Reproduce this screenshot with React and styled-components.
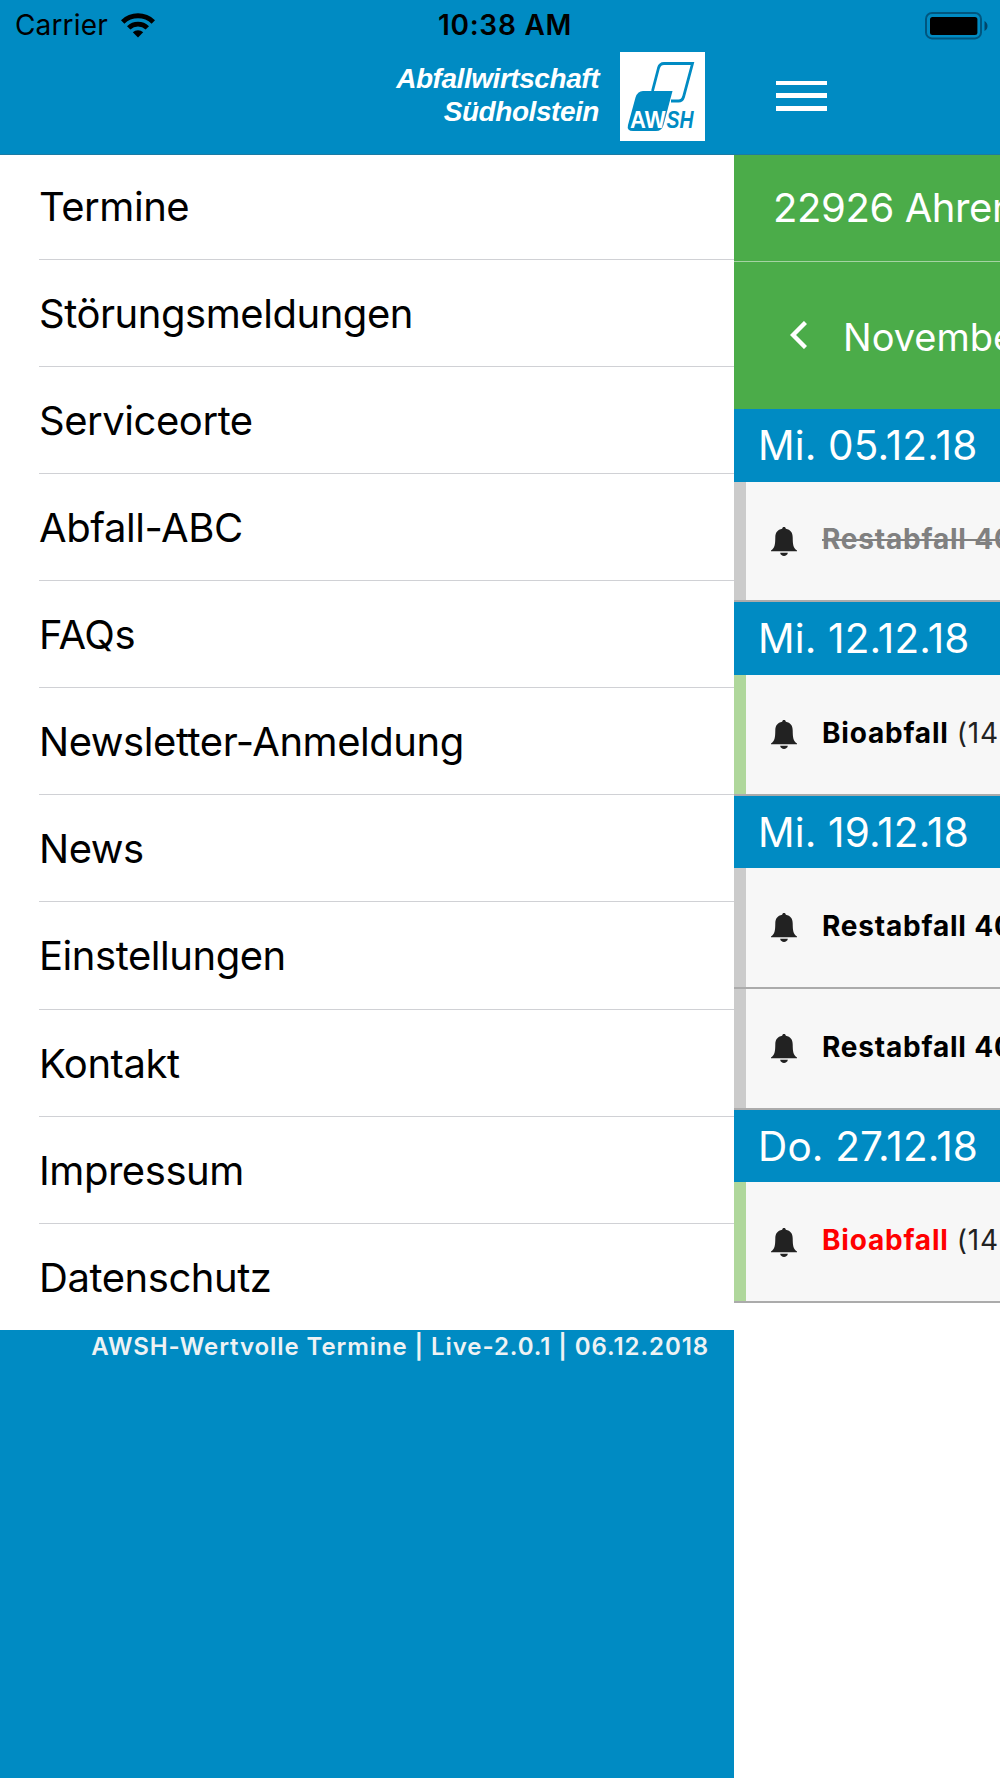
import styled, { createGlobalStyle } from "styled-components";

const menuItems = [
    "Termine",
    "Störungsmeldungen",
    "Serviceorte",
    "Abfall-ABC",
    "FAQs",
    "Newsletter-Anmeldung",
    "News",
    "Einstellungen",
    "Kontakt",
    "Impressum",
    "Datenschutz",
];

const termine = [
    { datum: "Mi. 05.12.18", abholungen: [{ id: 1, name: "Restabfall 40", tipo: "rest", vorbei: true }] },
    { datum: "Mi. 12.12.18", abholungen: [{ id: 2, name: "Bioabfall", info: "(14", tipo: "bio" }] },
    {
        datum: "Mi. 19.12.18",
        abholungen: [
            { id: 3, name: "Restabfall 40", tipo: "rest" },
            { id: 4, name: "Restabfall 40", tipo: "rest" },
        ],
    },
    { datum: "Do. 27.12.18", abholungen: [{ id: 5, name: "Bioabfall", info: "(14", tipo: "bio", verlegt: true }] },
];

const WifiIcon = () => (
    <Wifi viewBox="0 0 34 25">
        <path d="M0 7.2 A24.5 24.5 0 0 1 34 7.2 L30.6 10.7 A19.4 19.4 0 0 0 3.4 10.7 Z" />
        <path d="M6 13.2 A16 16 0 0 1 28 13.2 L24.6 16.6 A11 11 0 0 0 9.4 16.6 Z" />
        <path d="M11.8 19.2 A7.6 7.6 0 0 1 22.2 19.2 L17 24.5 Z" />
    </Wifi>
);

const BatteryIcon = () => (
    <Battery viewBox="0 0 64 28">
        <rect x="1" y="1" width="55" height="25.4" rx="6" fill="none" stroke="#00567f" strokeWidth="2" />
        <rect x="5" y="5" width="47.4" height="18" rx="2.5" />
        <path d="M59.5 9 C63.5 11 63.5 17 59.5 19 Z" fill="#00466a" />
    </Battery>
);

const BellIcon = () => (
    <Bell viewBox="0 0 26 29">
        <path d="M13 0 C14.1 0 14.7 .7 14.8 1.7 C19.6 2.6 21.7 5.6 21.7 10.5 C21.8 17 22 21 26 23.6 V24.3 H0 V23.6 C4 21 4.2 17 4.3 10.5 C4.3 5.6 6.4 2.6 11.2 1.7 C11.3 .7 11.9 0 13 0 Z" />
        <path d="M9.2 25.8 H16.8 C16.5 30 9.5 30 9.2 25.8 Z" />
    </Bell>
);

const AwshLogo = () => (
    <Logo viewBox="0 0 85 89">
        <rect width="85" height="89" fill="#fff" />
        <path d="M32.5 39 L38.5 16 Q39.8 11.5 44 11.5 H72.5 L63.5 45 Q62.3 49 58.5 49 H51" fill="none" stroke="#008bc3" strokeWidth="2.8" />
        <path d="M23 39 H52.5 L43.5 73 Q41.8 79 36 79 H13 Q6.5 79 8 73 L15.5 45.5 Q17.5 39 23 39 Z" fill="#008bc3" />
        <text x="10" y="76" fontSize="24.5" fontWeight="bold" fill="#fff" textLength="35.5" lengthAdjust="spacingAndGlyphs">AW</text>
        <text x="46.5" y="76" fontSize="24.5" fontWeight="bold" fontStyle="italic" fill="#008bc3" textLength="27" lengthAdjust="spacingAndGlyphs">SH</text>
    </Logo>
);

const App = () => {
    return (
        <>
            <GlobalStyle />
            <Screen>
                <StatusBar>
                    <Carrier>
                        Carrier
                        <WifiIcon />
                    </Carrier>
                    <Clock>10:38 AM</Clock>
                    <BatteryIcon />
                </StatusBar>
                <Header>
                    <Brand>
                        Abfallwirtschaft
                        <br />
                        Südholstein
                    </Brand>
                    <AwshLogo />
                    <MenuButton aria-label="Menü">
                        <MenuLine />
                        <MenuLine />
                        <MenuLine />
                    </MenuButton>
                </Header>
                <Body>
                    <Drawer>
                        <MenuList>
                            {menuItems.map((item) => (
                                <MenuItem key={item}>{item}</MenuItem>
                            ))}
                        </MenuList>
                        <Version>AWSH-Wertvolle Termine | Live-2.0.1 | 06.12.2018</Version>
                    </Drawer>
                    <Content>
                        <Place>22926 Ahren</Place>
                        <Month>
                            <Chevron viewBox="0 0 17 28">
                                <path d="M15.5 1.5 L3 14 L15.5 26.5" />
                            </Chevron>
                            Novembe
                        </Month>
                        {termine.map((tag) => (
                            <section key={tag.datum}>
                                <DateBar>{tag.datum}</DateBar>
                                {tag.abholungen.map((a) => (
                                    <Row key={a.id} $bio={a.tipo === "bio"}>
                                        <BellIcon />
                                        <Waste $vorbei={a.vorbei} $verlegt={a.verlegt}>{a.name}</Waste>
                                        {a.info && <Info>{a.info}</Info>}
                                    </Row>
                                ))}
                            </section>
                        ))}
                    </Content>
                </Body>
            </Screen>
        </>
    );
};

export default App;

// Styles
const GlobalStyle = createGlobalStyle`
  * {
    box-sizing: border-box;
  }

  body {
    margin: 0;
    font-family: Inter, "Liberation Sans", sans-serif;
  }
`;

const Screen = styled.div`
  width: 1000px;
  height: 1778px;
  display: flex;
  flex-direction: column;
  overflow: hidden;
  background-color: #fff;
`;

const StatusBar = styled.div`
  height: 50px;
  flex-shrink: 0;
  display: grid;
  grid-template-columns: 1fr auto 1fr;
  padding: 0 11px 0 15px;
  align-items: center;
  background-color: #008bc3;
  color: #000;
  font-size: 28px;
  line-height: 51px;

  > svg {
    justify-self: end;
  }
`;

const Carrier = styled.div`
  display: flex;
  align-items: center;
  gap: 13px;
  letter-spacing: 0.15px;
`;

const Clock = styled.div`
  padding-left: 6px;
  font-weight: 600;
  letter-spacing: 0.75px;
`;

const Wifi = styled.svg`
  width: 34px;
  height: 25px;
`;

const Battery = styled.svg`
  width: 64px;
  height: 28px;
`;

const Header = styled.header`
  height: 105px;
  flex-shrink: 0;
  display: flex;
  align-items: flex-start;
  padding-left: 320px;
  background-color: #008bc3;
  border-bottom: 1px solid #1b7ba4;
`;

const Brand = styled.div`
  width: 280px;
  padding: 12px 1px 0 0;
  text-align: right;
  color: #fff;
  font-family: "Liberation Sans", sans-serif;
  font-size: 28px;
  font-weight: bold;
  font-style: italic;
  line-height: 33px;
  letter-spacing: -0.45px;
`;

const Logo = styled.svg`
  width: 85px;
  height: 89px;
  margin: 2px 0 0 20px;
  font-family: "Liberation Sans", sans-serif;
`;

const MenuButton = styled.button`
  display: flex;
  flex-direction: column;
  gap: 8.5px;
  width: 51px;
  margin: 30.5px 0 0 71px;
  padding: 0;
  border: none;
  background: none;
`;

const MenuLine = styled.span`
  height: 4.4px;
  background-color: #fff;
`;

const Body = styled.div`
  flex: 1;
  display: flex;
`;

const Drawer = styled.nav`
  width: 734px;
  flex-shrink: 0;
  background-color: #008bc3;
`;

const MenuList = styled.ul`
  margin: 0;
  padding: 0 0 0 39px;
  list-style: none;
  background-color: #fff;
`;

const MenuItem = styled.li`
  height: 107.08px;
  border-bottom: 1px solid #d0d1d5;
  font-size: 40px;
  line-height: 107px;
  letter-spacing: -0.45px;
  color: #000;

  &:first-child {
    height: 105px;
    line-height: 103px;
  }

  &:last-child {
    height: 106.7px;
    border-bottom: none;
  }
`;

const Version = styled.div`
  padding-right: 25px;
  text-align: right;
  color: #eef2f4;
  font-size: 24px;
  font-weight: 600;
  line-height: 33px;
  letter-spacing: 0.92px;
`;

const Content = styled.main`
  flex: 1;
  min-width: 0;
  overflow: hidden;
  white-space: nowrap;
`;

const Place = styled.div`
  height: 107px;
  padding-left: 39px;
  border-bottom: 1px solid #a5d3a3;
  background-color: #4bac49;
  color: #fff;
  font-size: 40px;
  line-height: 106px;
  letter-spacing: -0.4px;
`;

const Month = styled.div`
  height: 147px;
  display: flex;
  align-items: center;
  padding: 3px 0 0 56px;
  background-color: #4bac49;
  color: #fff;
  font-size: 38px;
`;

const Chevron = styled.svg`
  width: 17px;
  height: 28px;
  flex-shrink: 0;
  margin: 0 36px 5px 0;
  fill: none;
  stroke: #fff;
  stroke-width: 4.4;
`;

const DateBar = styled.div`
  height: 72.5px;
  padding-left: 24px;
  background-color: #008bc3;
  color: #fff;
  font-size: 40.5px;
  line-height: 73px;
  letter-spacing: 0.15px;
`;

const Row = styled.div`
  height: 120.8px;
  display: flex;
  align-items: center;
  padding-left: 37px;
  border-bottom: 2px solid #ababab;
  box-shadow: inset 12px 0 0 ${({ $bio }) => ($bio ? "#afd79b" : "#cbcbcb")};
  background-color: #f7f7f7;
  font-size: 28px;
  letter-spacing: 0.8px;
`;

const Bell = styled.svg`
  width: 26px;
  height: 29px;
  flex-shrink: 0;
  margin: 1px 25px 0 0;
  fill: #222;
`;

const Waste = styled.span`
  padding-bottom: 3px;
  font-weight: 700;
  color: ${({ $verlegt, $vorbei }) => ($verlegt ? "#f00" : $vorbei ? "#808080" : "#000")};
  text-decoration: ${({ $vorbei }) => ($vorbei ? "line-through" : "none")};
`;

const Info = styled.span`
  padding: 0 0 3px 8px;
  color: #222;
`;
